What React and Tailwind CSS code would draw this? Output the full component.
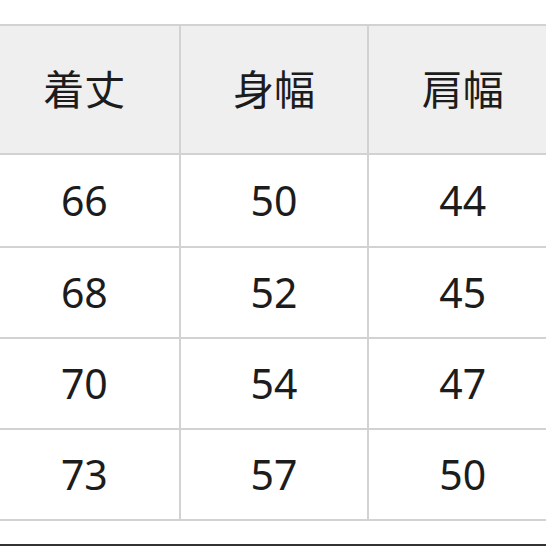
import React from 'react';

const headers = ['着丈', '身幅', '肩幅'];
const rows = [
  ['66', '50', '44'],
  ['68', '52', '45'],
  ['70', '54', '47'],
  ['73', '57', '50'],
];
const rowHeights = ['h-[93px]', 'h-[91px]', 'h-[91px]', 'h-[91px]'];

export default function App() {
  return (
    <div
      className="w-[546px] h-[546px] overflow-hidden bg-white flex flex-col text-[#1c1c1c]"
      style={{ fontFamily: '"Noto Sans", "Noto Sans CJK JP", sans-serif' }}
    >
      <div className="h-[24px] shrink-0" />
      <div className="ml-[-10px] w-[566px] shrink-0 grid grid-cols-3 border-t-2 border-[#d2d2d2]">
        {headers.map((h, i) => (
          <div
            key={h}
            className={`h-[129px] flex items-center justify-center bg-[#efefef] border-b-2 border-[#d2d2d2] text-[41px] leading-none ${
              i > 0 ? 'border-l-2' : ''
            }`}
          >
            {h}
          </div>
        ))}
        {rows.map((r, ri) =>
          r.map((v, ci) => (
            <div
              key={`${ri}-${ci}`}
              className={`${rowHeights[ri]} flex items-center justify-center border-b-2 border-[#d2d2d2] text-[41px] leading-none ${
                ci > 0 ? 'border-l-2' : ''
              }`}
            >
              {v}
            </div>
          ))
        )}
      </div>
      <div className="mt-auto h-[2px] shrink-0 bg-[#333333]" />
    </div>
  );
}
